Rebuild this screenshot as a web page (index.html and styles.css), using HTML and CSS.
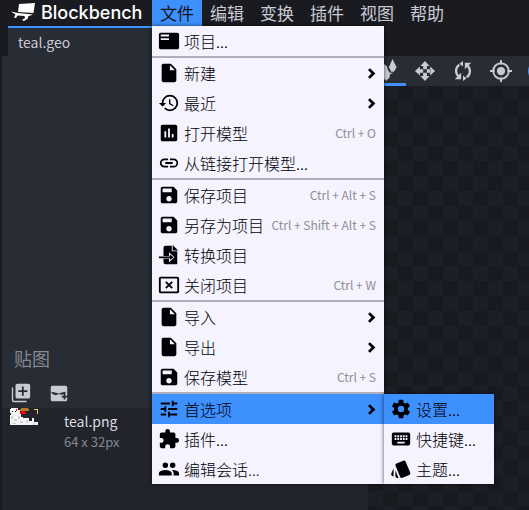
FILE: index.html
```html
<!DOCTYPE html>
<html lang="zh-CN">
<head>
<meta charset="utf-8">
<title>Blockbench</title>
<link rel="stylesheet" href="styles.css">
</head>
<body>
<svg class="sprite" aria-hidden="true">
  <symbol id="i-doc" viewBox="0 0 24 24"><path d="M6 2c-1.100 0-2 .9-2 2v16c0 1.100.9 2 2 2h12c1.100 0 2-.9 2-2V8l-6-6H6zm7 7V3.500L18.500 9H13z"/></symbol>
  <symbol id="i-save" viewBox="0 0 24 24"><path d="M17 3H5a2 2 0 0 0-2 2v14c0 1.100.9 2 2 2h14c1.100 0 2-.9 2-2V7l-4-4zm-5 16c-1.660 0-3-1.340-3-3s1.340-3 3-3 3 1.340 3 3-1.340 3-3 3zm3-10H5V5h10v4z"/></symbol>
  <symbol id="i-chevron" viewBox="0 0 24 24"><path d="M8 5l7 7-7 7" fill="none" stroke="currentColor" stroke-width="4.500"/></symbol>
</svg>
<header class="topbar">
  <a class="brand" href="#">
    <svg class="logo" viewBox="0 0 25 20"><path d="M8 1 24 0 22.500 10 7 9zM0 8.500l7 1.500 15 1.500-5 2v2L13 18l-2-1 3-2-.5-2-7-.5L5 15l-2-.5 1.500-3z"/></svg>
    <span>Blockbench</span>
  </a>
  <nav class="menubar">
    <button class="active">文件</button><button>编辑</button><button>变换</button><button>插件</button><button>视图</button><button>帮助</button>
  </nav>
</header>
<div class="tabs"><button class="tab">teal.geo</button></div>
<main class="work">
  <aside class="sidebar">
    <section class="textures">
      <h2>贴图</h2>
      <div class="tools">
        <button aria-label="导入贴图"><svg viewBox="0 0 24 24"><path fill-rule="evenodd" d="M3.500 6H2v14c0 1.100.9 2 2 2h14v-1.500H3.500V6zM20 2H8c-1.100 0-2 .9-2 2v12c0 1.100.9 2 2 2h12c1.100 0 2-.9 2-2V4c0-1.100-.9-2-2-2zM9 9h4V5h2v4h4v2h-4v4h-2v-4H9z"/></svg></button>
        <button aria-label="创建贴图"><svg viewBox="0 0 24 24"><path fill-rule="evenodd" d="M5 4h14a2 2 0 0 1 2 2v13a2 2 0 0 1-2 2H5a2 2 0 0 1-2-2V6c0-1.100.9-2 2-2zM4 10.500v2l4 2 4-1.500 3 1 2-1v2h-2v2h2v2h2v-2h2v-2h-2v-4.500l-4 1-3 1z"/></svg></button>
      </div>
    </section>
    <div class="texture">
      <svg class="thumb" viewBox="0 0 28 17" shape-rendering="crispEdges"><path fill="#f4f4f4" d="M1 0h7v2h2v3h1v4h2v1h6v3h3v-3h2v4h4v3H0V7h1V5H0V1h1z"/><path fill="#d2d2d6" d="M1 8h2v3H1zM4 11h3v2H4zM8 8h2v3H8zM10 13h3v2h-3zM16 12h2v3h-2zM23 15h2v2h-2zM2 15h4v1H2z"/><path fill="#b87828" d="M11 0h7v1h1v2h-9V1h1z"/><path fill="#e80808" d="M11 3h4v1h1v2h-6V4h1zM6 1h1v2H6z"/><path fill="#111" d="M2 3h1v1H2zM5 3h1v1H5z"/><path fill="#e7ca70" d="M24 1h4v1h-4zM27 2h1v4h-1z"/></svg>
      <div><div class="name">teal.png</div><div class="size">64 x 32px</div></div>
    </div>
  </aside>
  <section class="preview">
    <div class="toolbar">
      <button class="on" aria-label="选择"><svg viewBox="0 0 24 24"><path d="M18 0l4.500 9-3 5h-3L14 9zM8 5l4 3 1 4 2 3h4l-4 2v3l-4 4-1-2-3 1z"/></svg></button>
      <button aria-label="移动"><svg viewBox="0 0 24 24"><path d="M12 1l5 5.500H7zM12 23l-5-5.500h10zM1 12l5.500-5v10zM23 12l-5.500-5v10zM10 6h4v4h-4zM10 14h4v4h-4zM6 10h4v4H6zM14 10h4v4h-4z"/></svg></button>
      <button aria-label="旋转"><svg viewBox="0 0 24 24"><path d="M8 5.200A8 8 0 0 0 8 18.500M16 18.800A8 8 0 0 0 16 5.500" fill="none" stroke="currentColor" stroke-width="2.500"/><path d="M10 14v7H3zM14 10V3h7zM12 1v6L8 4zM12 23v-6l4 3z"/></svg></button>
      <button aria-label="枢轴"><svg viewBox="0 0 24 24"><circle cx="12" cy="12" r="4.500"/><path d="M12 0v5M12 19v5M0 12h5M19 12h5" stroke="currentColor" stroke-width="2"/><circle cx="12" cy="12" r="8.500" fill="none" stroke="currentColor" stroke-width="2"/></svg></button>
      <button class="blue" aria-label="顶点"><svg viewBox="0 0 24 24"><circle cx="12" cy="12" r="12"/></svg></button>
    </div>
    <div class="canvas"></div>
  </section>
</main>
<ul class="menu file-menu">
  <li><button><svg viewBox="0 0 24 24"><path d="M21 3H3c-1.100 0-2 .9-2 2v14c0 1.100.9 2 2 2h18c1.100 0 2-.9 2-2V5c0-1.100-.9-2-2-2zm-9 8H3V9h9v2zm0-4H3V5h9v2z"/></svg><span>项目...</span></button></li>
  <li class="sep"><button><svg><use href="#i-doc"/></svg><span>新建</span><svg class="chev"><use href="#i-chevron"/></svg></button></li>
  <li><button><svg viewBox="0 0 24 24"><path d="M13 3a9 9 0 0 0-9 9H1l3.890 3.890.07.14L9 12H6c0-3.870 3.130-7 7-7s7 3.130 7 7-3.130 7-7 7c-1.930 0-3.680-.79-4.940-2.060l-1.420 1.420A8.954 8.954 0 0 0 13 21a9 9 0 0 0 0-18zm-1 5v5l4.280 2.540.72-1.210-3.500-2.080V8H12z"/></svg><span>最近</span><svg class="chev"><use href="#i-chevron"/></svg></button></li>
  <li><button><svg viewBox="0 0 24 24"><path d="M19 3H5c-1.100 0-2 .9-2 2v14c0 1.100.9 2 2 2h14c1.100 0 2-.9 2-2V5c0-1.100-.9-2-2-2zM9 17H7v-7h2v7zm4 0h-2V7h2v10zm4 0h-2v-4h2v4z"/></svg><span>打开模型</span><kbd>Ctrl + O</kbd></button></li>
  <li><button><svg viewBox="0 0 24 24"><path d="M3.900 12c0-1.710 1.390-3.100 3.100-3.100h4V7H7a5 5 0 0 0 0 10h4v-1.900H7c-1.710 0-3.100-1.390-3.100-3.100zM8 13h8v-2H8v2zm9-6h-4v1.900h4a3.100 3.100 0 0 1 0 6.200h-4V17h4a5 5 0 0 0 0-10z"/></svg><span>从链接打开模型...</span></button></li>
  <li class="sep"><button><svg><use href="#i-save"/></svg><span>保存项目</span><kbd>Ctrl + Alt + S</kbd></button></li>
  <li><button><svg><use href="#i-save"/></svg><span>另存为项目</span><kbd>Ctrl + Shift + Alt + S</kbd></button></li>
  <li><button><svg viewBox="0 0 24 24"><path fill-rule="evenodd" d="M8 2h7v6h6v13a1 1 0 0 1-1 1H8a2 2 0 0 1-2-2v-4h6v4l6-5.500L12 9v4H6V4a2 2 0 0 1 2-2zM16 1l6 6h-6zM1 13.500h12v-2l4 3-4 3v-2H1z"/></svg><span>转换项目</span></button></li>
  <li><button><svg viewBox="0 0 24 24"><path fill-rule="evenodd" d="M3 3h18a2 2 0 0 1 2 2v14a2 2 0 0 1-2 2H3a2 2 0 0 1-2-2V5c0-1.100.9-2 2-2zM3 5v14h18V5z"/><path d="M8.500 8.500l7 7M15.500 8.500l-7 7" stroke="currentColor" stroke-width="2"/></svg><span>关闭项目</span><kbd>Ctrl + W</kbd></button></li>
  <li class="sep"><button><svg><use href="#i-doc"/></svg><span>导入</span><svg class="chev"><use href="#i-chevron"/></svg></button></li>
  <li><button><svg><use href="#i-doc"/></svg><span>导出</span><svg class="chev"><use href="#i-chevron"/></svg></button></li>
  <li><button><svg><use href="#i-save"/></svg><span>保存模型</span><kbd>Ctrl + S</kbd></button></li>
  <li class="sep open"><button class="active"><svg viewBox="0 0 24 24"><path d="M3 17v2h6v-2H3zM3 5v2h10V5H3zm10 16v-2h8v-2h-8v-2h-2v6h2zM7 9v2H3v2h4v2h2V9H7zm14 4v-2H11v2h10zm-6-4h2V7h4V5h-4V3h-2v6z"/></svg><span>首选项</span><svg class="chev"><use href="#i-chevron"/></svg></button>
    <ul class="menu submenu">
      <li><button class="active"><svg viewBox="0 0 24 24"><path d="M19.430 12.980c.04-.32.07-.64.07-.98s-.03-.66-.07-.98l2.110-1.650c.19-.15.24-.42.12-.64l-2-3.460c-.12-.22-.39-.3-.61-.22l-2.490 1c-.52-.4-1.080-.73-1.690-.98l-.38-2.650A.488.488 0 0 0 14 2h-4c-.25 0-.46.18-.49.42l-.38 2.650c-.61.25-1.170.59-1.690.98l-2.490-1c-.23-.09-.49 0-.61.22l-2 3.460c-.13.22-.07.49.12.64l2.110 1.650c-.04.32-.07.65-.07.98s.03.66.07.98l-2.110 1.650c-.19.15-.24.42-.12.64l2 3.460c.12.22.39.3.61.22l2.490-1c.52.4 1.080.73 1.690.98l.38 2.650c.03.24.24.42.49.42h4c.25 0 .46-.18.49-.42l.38-2.650c.61-.25 1.170-.59 1.690-.98l2.490 1c.23.09.49 0 .61-.22l2-3.460c.12-.22.07-.49-.12-.64l-2.110-1.650zM12 15.500a3.500 3.500 0 1 1 0-7 3.500 3.500 0 0 1 0 7z"/></svg><span>设置...</span></button></li>
      <li><button><svg viewBox="0 0 24 24"><path d="M20 5H4c-1.100 0-2 .9-2 2v10c0 1.100.9 2 2 2h16c1.100 0 2-.9 2-2V7c0-1.100-.9-2-2-2zm-9 3h2v2h-2V8zm0 3h2v2h-2v-2zM8 8h2v2H8V8zm0 3h2v2H8v-2zm-1 2H5v-2h2v2zm0-3H5V8h2v2zm9 7H8v-2h8v2zm0-4h-2v-2h2v2zm0-3h-2V8h2v2zm3 3h-2v-2h2v2zm0-3h-2V8h2v2z"/></svg><span>快捷键...</span></button></li>
      <li><button><svg viewBox="0 0 24 24"><path d="M2.530 19.650l1.340.56v-9.030l-2.430 5.860c-.41 1.020.08 2.190 1.090 2.610zm19.500-3.700L17.070 3.980a2.013 2.013 0 0 0-2.590-1.100L7.100 5.950a2 2 0 0 0-1.080 2.600l4.960 11.970a1.998 1.998 0 0 0 2.600 1.080l7.360-3.050a1.994 1.994 0 0 0 1.090-2.600zM5.880 19.750c0 1.100.9 2 2 2h1.450l-3.450-8.340v6.340z"/></svg><span>主题...</span></button></li>
    </ul>
  </li>
  <li><button><svg viewBox="0 0 24 24"><path d="M20.500 11H19V7c0-1.100-.9-2-2-2h-4V3.500a2.500 2.500 0 0 0-5 0V5H4c-1.100 0-1.990.9-1.990 2v3.800H3.500a2.700 2.700 0 0 1 0 5.400H2V20c0 1.100.9 2 2 2h3.800v-1.500a2.700 2.700 0 0 1 5.400 0V22H17c1.100 0 2-.9 2-2v-4h1.500a2.500 2.500 0 0 0 0-5z"/></svg><span>插件...</span></button></li>
  <li><button><svg viewBox="0 0 24 24"><path d="M16 11a3 3 0 1 0 0-6 3 3 0 0 0 0 6zm-8 0a3 3 0 1 0 0-6 3 3 0 0 0 0 6zm0 2c-2.330 0-7 1.170-7 3.500V19h14v-2.500c0-2.330-4.670-3.500-7-3.500zm8 0c-.29 0-.62.02-.97.05 1.160.84 1.970 1.970 1.970 3.450V19h6v-2.500c0-2.330-4.670-3.500-7-3.500z"/></svg><span>编辑会话<span class="ellipsis">…</span></span></button></li>
</ul>
</body>
</html>
```
FILE: styles.css
```css
* { box-sizing: border-box; }
body {
  margin: 0;
  min-height: 100vh;
  display: flex;
  flex-direction: column;
  overflow: hidden;
  background: #1a1b20;
  color: #cacad4;
  font: 16px/30px "Noto Sans CJK SC", sans-serif;
}
button {
  border: 0;
  padding: 0;
  background: none;
  color: inherit;
  font: inherit;
}
svg { fill: currentColor; width: 22px; height: 22px; flex: none; display: block; }
.sprite { position: absolute; width: 0; height: 0; }

.topbar { display: flex; height: 26px; line-height: 26px; }
.brand {
  display: flex;
  align-items: center;
  gap: 5px;
  width: 152px;
  padding-left: 11px;
  color: #fff;
  text-decoration: none;
  font: 500 18px/28px Inter, sans-serif;
}
.logo { width: 25px; height: 20px; }
.menubar { display: flex; font-size: 17px; }
.menubar button { padding: 0 8px; }
.menubar .active { background: #3e90ff; color: #14151a; }

.tabs { display: flex; height: 30px; padding-left: 8px; }
.tab {
  width: 240px;
  padding-left: 10px;
  border-top: 2px solid #3e90ff;
  background: #282c34;
  text-align: left;
  font-size: 14px;
  line-height: 28px;
}

.work { flex: 1; display: flex; padding-left: 2px; }
.sidebar { width: 366px; background: #21252b; }
.textures { height: 352px; padding: 0 6px; background: #282c34; display: flex; flex-direction: column; justify-content: flex-end; }
.textures h2 { margin: 0; padding-left: 6px; font-size: 18px; font-weight: 400; line-height: 40px; color: #848891; }
.tools { display: flex; gap: 16px; height: 30px; align-items: center; padding-left: 2px; }
.texture { display: flex; gap: 26px; padding-left: 8px; }
.thumb { width: 28px; height: 17px; }
.name { font-size: 14px; line-height: 26px; color: #dcdce4; }
.size { font-size: 13px; line-height: 16px; color: #848891; }

.preview { flex: 1; display: flex; flex-direction: column; min-width: 0; }
.toolbar { display: flex; height: 30px; background: #282c34; overflow: hidden; }
.toolbar button { flex: none; width: 38px; display: flex; justify-content: center; align-items: center; }
.toolbar .on { border-bottom: 3px solid #3e90ff; }
.toolbar .blue { color: #3e90ff; }
.canvas { flex: 1; background: repeating-conic-gradient(#1c2026 0 25%, #181a1f 0 50%) 0 0 / 30px 30px; }

.menu {
  position: absolute;
  margin: 0;
  padding: 0;
  list-style: none;
  background: #f4f3ff;
  color: #000006;
  box-shadow: 0 0 4px #000a;
}
.file-menu { left: 152px; top: 26px; width: 232px; font-weight: 300; }
.submenu { left: 100%; top: 0; width: 110px; }
.menu li { position: relative; }
.menu button { display: flex; align-items: center; gap: 4px; width: 100%; height: 30px; padding: 0 8px 0 6px; white-space: nowrap; }
.menu .sep { border-top: 2px solid #b0aeba; }
.menu .active { background: #3e90ff; }
.menu kbd { margin-left: auto; font: 400 12px/30px "Noto Sans CJK SC", sans-serif; color: #8e8e98; }
.menu .chev { width: 15px; height: 15px; margin-left: auto; margin-right: -3px; }
.ellipsis { font-family: "Noto Sans", sans-serif; }
```
